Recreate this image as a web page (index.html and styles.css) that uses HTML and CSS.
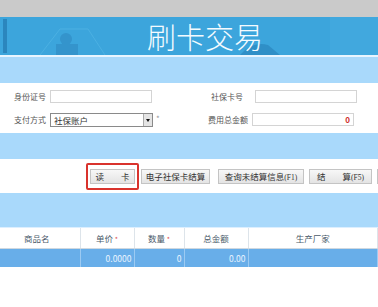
FILE: index.html
```html
<!DOCTYPE html>
<html lang="zh">
  <head>
    <meta charset="UTF-8" />
    <title>刷卡交易</title>
    <link rel="stylesheet" href="styles.css">
  </head>
  <body>
    <div class="topbar"></div>
    <div class="header">
      <svg class="header-deco" width="378" height="38" viewBox="0 0 378 38">
        <rect x="3" y="2" width="4" height="34" fill="#2b86bd" />
        <path d="M40 38 L60 12 L88 12 L105 38" fill="none" stroke="#4cb0e2" stroke-width="1" />
        <circle cx="66" cy="22" r="6" fill="#3494cc" />
        <rect x="56" y="27" width="22" height="11" fill="#3494cc" />
        <path d="M240 38 Q252 24 268 28 L280 38 Z" fill="#2f8fc7" />
        <rect x="330" y="0" width="48" height="38" fill="#48ace0" opacity="0.4" />
      </svg>
      <h1>刷卡交易</h1>
    </div>
    <div class="sep"></div>
    <div class="band"></div>

    <div class="form">
      <div class="form-row">
        <label class="lbl">身份证号</label>
        <input class="field" type="text" />
        <span class="gap"></span>
        <label class="lbl lbl-right">社保卡号</label>
        <input class="field" type="text" />
      </div>
      <div class="form-row">
        <label class="lbl">支付方式</label>
        <div class="select">
          <span>社保账户</span>
          <span class="arrow"></span>
        </div>
        <span class="star">*</span>
        <label class="lbl lbl-right">费用总金额</label>
        <div class="field amount">0</div>
      </div>
    </div>

    <div class="band"></div>

    <div class="actions">
      <div class="highlight">
        <button class="btn btn-read">读　　卡</button>
      </div>
      <button class="btn btn-ecard">电子社保卡结算</button>
      <button class="btn btn-query">查询未结算信息<small>(F1)</small></button>
      <button class="btn btn-settle">结　　算<small>(F5)</small></button>
      <button class="btn btn-more"></button>
    </div>

    <div class="band band-tall"></div>

    <table class="grid">
      <thead>
        <tr>
          <th class="c-name">商品名</th>
          <th class="c-price">单价 <i>*</i></th>
          <th class="c-qty">数量 <i>*</i></th>
          <th class="c-total">总金额</th>
          <th class="c-maker">生产厂家</th>
        </tr>
      </thead>
      <tbody>
        <tr>
          <td></td>
          <td class="num">0.0000</td>
          <td class="num">0</td>
          <td class="num">0.00</td>
          <td></td>
        </tr>
      </tbody>
    </table>
  </body>
</html>
```

FILE: styles.css
```css
* {
  box-sizing: border-box;
  font-family: "Noto Sans CJK SC", "Liberation Sans", sans-serif;
}

body {
  margin: 0;
  width: 378px;
  height: 307px;
  overflow: hidden;
  background: white;
  color: #444;
  font-size: 10px;
}

.topbar {
  height: 17px;
  background: #cacaca;
}

.header {
  position: relative;
  height: 38px;
  background: #3ca5dc;
  display: flex;
  align-items: center;
  justify-content: center;
}

.header-deco {
  position: absolute;
  left: 0;
  top: 0;
}

.header h1 {
  position: relative;
  margin: 0 0 0 32px;
  color: #f4fbff;
  font-size: 29px;
  font-weight: 300;
  line-height: 1;
}

.sep {
  height: 2px;
  background: #e8f5ff;
}

.band {
  height: 26px;
  background: #a9d9fb;
}

.band-tall {
  height: 35px;
  border-bottom: 1px solid #dcefff;
}

.form {
  height: 50px;
  padding: 7px 0 0 0;
  display: flex;
  flex-direction: column;
  gap: 10px;
}

.form-row {
  display: flex;
  align-items: center;
  height: 13px;
}

.lbl {
  width: 50px;
  padding-left: 14px;
  font-size: 8px;
  color: #555;
  white-space: nowrap;
}

.lbl-right {
  width: 44px;
  padding-left: 0;
}

.field {
  width: 102px;
  height: 13px;
  border: 1px solid #d4d4d4;
  background: white;
  margin: 0;
  padding: 0;
}

.gap {
  width: 59px;
}

.select {
  width: 103px;
  height: 14px;
  border: 1px solid #8a8a8a;
  display: flex;
  align-items: center;
  justify-content: space-between;
  padding-left: 3px;
  font-size: 8.5px;
  color: #333;
}

.arrow {
  width: 9px;
  height: 12px;
  background: #e4e4e4;
  border-left: 1px solid #aaa;
  position: relative;
}

.arrow::after {
  content: "";
  position: absolute;
  left: 2px;
  top: 5px;
  border-left: 2px solid transparent;
  border-right: 2px solid transparent;
  border-top: 3px solid #111;
}

.star {
  width: 55px;
  padding-left: 3px;
  font-size: 8px;
  color: #999;
  align-self: flex-start;
}

.amount {
  text-align: right;
  padding-right: 3px;
  font-size: 8px;
  line-height: 11px;
  font-weight: bold;
  color: #d0302c;
}

.actions {
  height: 34px;
  display: flex;
  align-items: center;
  padding-left: 86px;
  white-space: nowrap;
  overflow: hidden;
}

.highlight {
  border: 2px solid #d9332d;
  border-radius: 2px;
  padding: 4px 2px;
  display: flex;
  flex-shrink: 0;
}

.btn {
  height: 15px;
  padding: 0;
  border: 1px solid #c4c4c4;
  background: linear-gradient(#f7f7f7, #e4e4e4);
  font-size: 8.5px;
  color: #333;
  line-height: 13px;
  flex-shrink: 0;
}

.btn small {
  font-size: 7.5px;
  font-family: "Liberation Serif", serif;
}

.btn-read {
  width: 45px;
}

.btn-ecard {
  width: 69px;
  margin-left: 2px;
}

.btn-query {
  width: 86px;
  margin-left: 8px;
}

.btn-settle {
  width: 63px;
  margin-left: 5px;
}

.btn-more {
  width: 20px;
  margin-left: 5px;
}

.grid {
  width: 378px;
  border-collapse: collapse;
  table-layout: fixed;
  font-size: 8.5px;
}

.grid th {
  height: 20px;
  font-weight: normal;
  color: #4a5a6a;
  border-right: 1px solid #dde4ea;
  border-bottom: 1px solid #cfd8e0;
}

.grid th i {
  font-style: normal;
  color: #e05050;
  font-size: 7px;
}

.c-name {
  width: 80px;
  text-align: left;
  padding-left: 24px;
}

.c-price {
  width: 54px;
}

.c-qty {
  width: 50px;
}

.c-total {
  width: 64px;
}

.grid td {
  height: 19px;
  background: #68aee9;
  color: #eaf4ff;
  border-right: 1px solid #9ccaf2;
  padding: 0 2px;
}

.grid td.num {
  text-align: right;
}
```
